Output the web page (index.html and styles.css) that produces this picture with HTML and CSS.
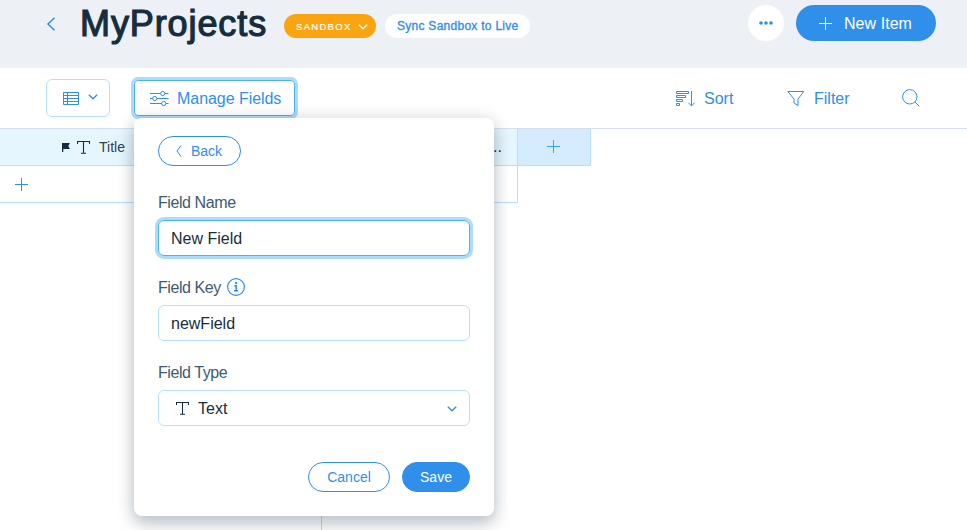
FILE: index.html
```html
<!DOCTYPE html>
<html lang="en">
<head>
<meta charset="utf-8">
<title>MyProjects</title>
<link rel="stylesheet" href="styles.css">
</head>
<body>
<header class="header">
  <svg class="back-icon" width="10" height="14" viewBox="0 0 10 14"><path d="M8.500 .8 2 7l6.500 6.200"/></svg>
  <h1 class="title">MyProjects</h1>
  <button class="badge"><span class="badge-text">SANDBOX</span><svg width="10" height="6" viewBox="0 0 10 6"><path d="M.8.8 5 4.800 9.200.8"/></svg></button>
  <button class="sync"><span class="sync-text">Sync Sandbox to Live</span></button>
  <button class="more"><svg width="14" height="4" viewBox="0 0 14 4"><circle cx="2" cy="2" r="1.800"/><circle cx="7" cy="2" r="1.800"/><circle cx="12" cy="2" r="1.800"/></svg></button>
  <button class="new-item"><svg width="13" height="13" viewBox="0 0 13 13"><path d="M6.500 0v13M0 6.500h13"/></svg><span class="new-text">New Item</span></button>
</header>
<div class="toolbar">
  <button class="view">
    <svg width="17" height="14" viewBox="0 0 17 14"><path d="M.5.5h15v12H.5zM4.500.5v12M.5 3.500h15M.5 6.500h15M.5 9.500h15"/></svg>
    <svg width="10" height="6" viewBox="0 0 10 6"><path d="M.8.8 5 4.800 9.200.8"/></svg>
  </button>
  <button class="manage">
    <svg width="19" height="16" viewBox="0 0 19 16"><path d="M0 2.500h10.500M15 2.500h3.500M0 7.500h2.500M7 7.500h11.500M0 12.500h11.500M16 12.500h2.500"/><circle cx="12.700" cy="2.500" r="2.100"/><circle cx="4.700" cy="7.500" r="2.100"/><circle cx="13.700" cy="12.500" r="2.100"/></svg>
    <span class="manage-text">Manage Fields</span>
  </button>
  <button class="tool sort">
    <svg width="20" height="16" viewBox="0 0 20 16"><path d="M.5.5h12v2H.5zM.5 4.500h9v2h-9zM.5 8.500h6v2h-6zM.5 12.500h3v2h-3zM15.500 0v15M12.300 11.700l3.200 3.200 3.200-3.200"/></svg>
    <span class="sort-text">Sort</span>
  </button>
  <button class="tool filter">
    <svg width="18" height="16" viewBox="0 0 18 16"><path d="M.8.5h16L11 8v6.500l-4-2.500V8z"/></svg>
    <span class="filter-text">Filter</span>
  </button>
  <button class="tool search"><svg width="18" height="18" viewBox="0 0 18 18"><circle cx="7.800" cy="7.800" r="7.200"/><path d="m13 13 4.300 4.300"/></svg></button>
</div>
<main class="table">
  <div class="row head-row">
    <div class="cell head-title">
      <svg class="flag" width="9" height="9" viewBox="0 0 9 9"><path d="M0 0h8L6.300 3 8 6H1.300v3H0z"/></svg>
      <svg class="type" width="13" height="13" viewBox="0 0 13 13"><path d="M.5 3V.5h12V3M6.500.5v11.500M4 12.300h5"/></svg>
      <span class="col-text">Title</span>
    </div>
    <div class="cell head-rest"><span>...</span></div>
    <div class="add-col"><svg width="13" height="13" viewBox="0 0 13 13"><path d="M6.500 0v13M0 6.500h13"/></svg></div>
  </div>
  <div class="row add-row"><svg width="13" height="13" viewBox="0 0 13 13"><path d="M6.500 0v13M0 6.500h13"/></svg></div>
  <div class="column-rest"></div>
</main>
<section class="popover">
  <button class="back"><svg width="6" height="12" viewBox="0 0 6 12"><path d="M5 .5 1 6l4 5.500"/></svg><span class="back-text">Back</span></button>
  <label class="label">Field Name</label>
  <div class="input focused"><span class="v-name">New Field</span></div>
  <label class="label"><span class="key-text">Field Key</span><svg class="info" width="18" height="18" viewBox="0 0 18 18"><circle cx="9" cy="9" r="8.400"/><path d="M7.200 7.800h2v5M7 12.800h4.200"/><rect x="8" y="4" width="2" height="2"/></svg></label>
  <div class="input"><span class="v-key">newField</span></div>
  <label class="label">Field Type</label>
  <div class="input select">
    <svg class="type" width="13" height="13" viewBox="0 0 13 13"><path d="M.5 3V.5h12V3M6.500.5v11.500M4 12.300h5"/></svg>
    <span class="v-type">Text</span>
    <svg class="chevron" width="10" height="6" viewBox="0 0 10 6"><path d="M.8.8 5 4.800 9.200.8"/></svg>
  </div>
  <div class="actions"><button class="cancel">Cancel</button><button class="save">Save</button></div>
</section>
</body>
</html>
```
FILE: styles.css
```css
* { box-sizing: border-box; }
body {
  margin: 0;
  height: 530px;
  overflow: hidden;
  display: flex;
  flex-direction: column;
  position: relative;
  background: #fff;
  color: #162d3d;
  font-family: "Liberation Sans", Arial, sans-serif;
  font-size: 16px;
}
button {
  display: flex;
  align-items: center;
  padding: 0;
  border: 0;
  background: none;
  font: inherit;
  text-align: left;
  color: #2f8fea;
  white-space: nowrap;
}
svg { display: block; flex: none; fill: none; stroke: #2f8fea; }
.header {
  height: 68px;
  flex: none;
  display: flex;
  align-items: flex-start;
  background: #edf1f6;
}
.back-icon { margin: 17px 0 0 46px; stroke-width: 1.5; }
.title {
  width: 204px;
  margin: 3px 0 0 24px;
  font-size: 36px;
  line-height: 42px;
  font-weight: 400;
  letter-spacing: .9px;
  -webkit-text-stroke: 1.2px #162d3d;
}
.badge {
  width: 92px;
  height: 24px;
  margin-top: 14px;
  padding-left: 12px;
  border-radius: 12px;
  background: #faa510;
  color: #fff;
  font-size: 9.5px;
  letter-spacing: 1.3px;
  -webkit-text-stroke: .2px #fff;
}
.badge-text { width: 62px; padding-top: 1px; }
.badge svg { stroke: #fff; stroke-width: 1.3; margin-top: 1px; }
.sync {
  width: 145px;
  height: 24px;
  margin: 14px 0 0 9px;
  padding-left: 12px;
  border-radius: 12px;
  background: #fff;
  font-size: 12px;
  letter-spacing: .27px;
  -webkit-text-stroke: .35px #2f8fea;
}
.more {
  width: 36px;
  height: 36px;
  margin: 5px 0 0 auto;
  justify-content: center;
  border-radius: 50%;
  background: #fff;
}
.more svg { fill: #2f8fea; stroke: none; margin-right: 1px; }
.new-item {
  width: 140px;
  height: 36px;
  margin: 5px 31px 0 12px;
  padding-left: 23px;
  gap: 12px;
  border-radius: 18px;
  background: #308fea;
  color: #fff;
}
.new-item svg { stroke: #fff; margin-top: 1px; }
.new-text { letter-spacing: .05px; padding-top: 1px; }
.toolbar {
  height: 61px;
  flex: none;
  display: flex;
  align-items: center;
  padding-left: 46px;
  border-bottom: 1px solid #d6e0ed;
}
.view {
  width: 64px;
  height: 38px;
  padding-left: 16px;
  gap: 8px;
  border: 1px solid #b8e0fd;
  border-radius: 6px;
}
.view svg { margin-top: 1px; }
.view svg + svg { stroke-width: 1.3; margin: 0 0 2px; }
.manage {
  width: 161px;
  height: 36px;
  margin-left: 24px;
  padding-left: 15px;
  gap: 8px;
  border: 1px solid #4eb0f5;
  border-radius: 4px;
  box-shadow: 0 0 0 3px #aadcfb;
}
.manage svg { margin-top: 1px; }
.manage-text { letter-spacing: -.05px; padding-top: 2px; }
.tool { height: 36px; gap: 8px; }
.tool svg { margin-top: 1px; }
.sort-text, .filter-text { padding-top: 2px; }
.sort { margin-left: 381px; width: 111px; }
.filter { width: 115px; gap: 9px; }
.search svg { margin: 0; }
.table { flex: 1; display: flex; flex-direction: column; }
.row { display: flex; height: 37px; flex: none; }
.cell { background: #e6f6fe; border-bottom: 1px solid #b8e0fd; display: flex; align-items: center; }
.head-title { width: 321px; padding-left: 62px; font-size: 14px; color: #2b4257; }
.flag { fill: #162d3d; stroke: none; }
.type { stroke: #162d3d; stroke-width: 1.1; }
.head-title .type { margin: 0 9px 0 6px; }
.head-rest {
  width: 197px;
  justify-content: flex-end;
  padding-right: 15px;
  border-right: 1px solid #b8e0fd;
  font-size: 16px;
}
.add-col {
  width: 73px;
  display: flex;
  align-items: center;
  justify-content: center;
  background: #d5ecff;
  border: solid #b8e0fd;
  border-width: 0 1px 1px 0;
}
.add-col svg { stroke: #3ea5f3; margin: 0 2px 1px 0; }
.add-row {
  width: 518px;
  align-items: center;
  padding-left: 15px;
  border: solid #b8e0fd;
  border-width: 0 1px 1px 0;
}
.column-rest { flex: 1; width: 322px; border-right: 1px solid #b8d9f2; }
.popover {
  position: absolute;
  left: 134px;
  top: 118px;
  width: 360px;
  height: 398px;
  padding: 18px 24px;
  border-radius: 8px;
  background: #fff;
  box-shadow: 0 0 18px rgba(22, 45, 61, .12), 0 8px 16px rgba(22, 45, 61, .24);
}
.back {
  width: 83px;
  height: 30px;
  margin-bottom: 26px;
  padding-left: 17px;
  gap: 9px;
  border: 1px solid #308fea;
  border-radius: 15px;
  font-size: 14px;
}
.label {
  display: flex;
  align-items: center;
  height: 20px;
  margin-bottom: 8px;
  padding-top: 2px;
  color: #405b70;
  letter-spacing: -.42px;
}
.info { margin: 0 0 3px 6px; stroke-width: 1.2; }
.info path { stroke-width: 1.6; }
.info rect { fill: #2f8fea; stroke: none; }
.input {
  display: flex;
  align-items: center;
  height: 36px;
  margin-bottom: 21px;
  padding: 2px 12px 0;
  border: 1px solid #b8e0fd;
  border-radius: 6px;
}
.focused { border-color: #4eb0f5; box-shadow: 0 0 0 3px #aadcfb; }
.select { padding-left: 17px; }
.select .type { margin: 0 9px 2px 0; }
.chevron { margin-left: auto; margin-bottom: 1px; stroke-width: 1.4; }
.actions { display: flex; justify-content: flex-end; gap: 12px; margin-top: 36px; }
.actions button { height: 30px; justify-content: center; border: 1px solid #308fea; border-radius: 15px; font-size: 14px; }
.cancel { width: 82px; }
.actions .save { width: 68px; background: #308fea; color: #fff; }
```
